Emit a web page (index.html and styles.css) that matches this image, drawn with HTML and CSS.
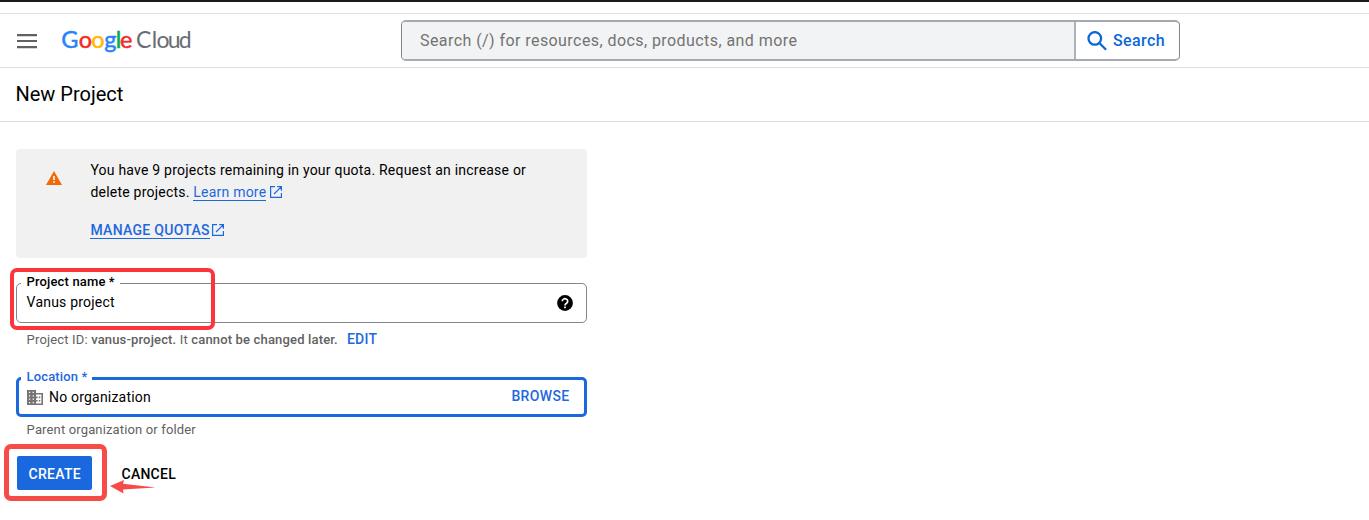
FILE: index.html
```
<!DOCTYPE html>
<html lang="en">
<head>
<meta charset="utf-8">
<title>New Project</title>
<link rel="stylesheet" href="styles.css">
</head>
<body>
<div class="window-edge"></div>
<header class="topbar">
  <svg class="menu-icon" width="20" height="15" viewBox="0 0 20 15"><path d="M0 0h20v2.2H0zM0 6.1h20v2H0zM0 12h20v2.2H0z" fill="#616161"/></svg>
  <svg class="logo" width="134" height="32" viewBox="0 0 134 32">
    <text y="20.4" class="logo-google"><tspan x="0.2" class="blue">G</tspan><tspan x="17.8" class="red">o</tspan><tspan x="30.3" class="yellow">o</tspan><tspan x="43.3" class="blue">g</tspan><tspan x="54.8" class="green">l</tspan><tspan x="58.9" class="red">e</tspan></text>
    <text y="20.4" class="logo-cloud" x="75 90.7 95.5 106.8 117.7">Cloud</text>
  </svg>
  <div class="search">
    <div class="search-input">Search (/) for resources, docs, products, and more</div>
    <div class="search-button">
      <svg width="20" height="20" viewBox="0 0 20 20" fill="none" stroke="#0b67dc" stroke-width="2.3"><circle cx="7.8" cy="7.4" r="6.3"/><path d="M12.1 11.7l7 7"/></svg>
      <span>Search</span>
    </div>
  </div>
</header>
<h1 class="page-title">New Project</h1>
<main class="content">
  <section class="notice">
    <svg class="warning" width="16" height="14" viewBox="0 0 16 14"><path d="M8 0l8 14H0z" fill="#f06a0a"/><path d="M7.2 5h1.6v4H7.2zM7.2 10.2h1.6v1.6H7.2z" fill="#fff"/></svg>
    <div class="notice-body">
      <p class="notice-text">You have 9 projects remaining in your quota. Request an increase or<br>delete projects. <a class="link">Learn more</a><svg class="external" width="12" height="12" viewBox="0 0 12 12"><path d="M5 .6H.6v10.8h10.8V7M7.2.6h4.2v4.2M11.2.8L4 8" /></svg></p>
      <p class="quotas"><a class="link">MANAGE QUOTAS</a><svg class="external" width="12" height="12" viewBox="0 0 12 12"><path d="M5 .6H.6v10.8h10.8V7M7.2.6h4.2v4.2M11.2.8L4 8" /></svg></p>
    </div>
  </section>
  <div class="field name-field">
    <label class="label">Project name *</label>
    <span class="value">Vanus project</span>
    <svg width="16" height="16" viewBox="0 0 16 16"><circle cx="8" cy="8" r="7.9"/><path d="M5.3 6.3a2.7 2.5 0 1 1 4.3 1.9C8.6 8.9 8 9.1 8 10.4M8 11.5v1.7" fill="none" stroke="#fff" stroke-width="1.7"/></svg>
    <div class="name-highlight"></div>
  </div>
  <p class="hint id-hint">Project ID: <b>vanus-project.</b> It <b>cannot be changed later.</b><a class="edit">EDIT</a></p>
  <div class="field location-field">
    <label class="label">Location *</label>
    <svg width="16" height="15" viewBox="0 0 16 15"><path fill="#757575" fill-rule="evenodd" d="M0 0h9v3h7v12H0zM1.9 1.8v1.2h1.3V1.8zM5.6 1.8v1.2h1.3V1.8zM1.9 5.2v1.2h1.3V5.2zM5.6 5.2v1.2h1.3V5.2zM1.9 8.6v1.2h1.3V8.6zM5.6 8.6v1.2h1.3V8.6zM1.9 12v1.2h1.3V12zM5.6 12v1.2h1.3V12zM9 4.6v2h1.6v1.6H9V10h1.6v1.6H9v1.8h5.4V4.6zM11.8 6.6h1.5v1.6h-1.5zM11.8 10h1.5v1.6h-1.5z"/></svg>
    <span class="value">No organization</span>
    <span class="browse">BROWSE</span>
  </div>
  <p class="hint">Parent organization or folder</p>
  <div class="actions">
    <div class="create">CREATE<div class="create-highlight"></div></div>
    <div class="cancel">CANCEL<svg class="arrow" width="46" height="14" viewBox="0 0 46 14"><path d="M0 6L14 0L13 3.8L45.5 7.5L13 9.4L13.5 13.6Z" fill="#f74b48"/></svg></div>
  </div>
</main>
</body>
</html>
```

FILE: styles.css
```
* { box-sizing: border-box; }
body { margin: 0; background: #fff; color: #000; font: 14px/22px Roboto, sans-serif; height: 520px; overflow: hidden; }
p, h1 { margin: 0; }
svg { display: block; flex: none; }
.window-edge { height: 14px; border-top: 2px solid #1b191a; border-bottom: 1px solid #e0e0e0; }
.topbar { height: 54px; display: flex; align-items: flex-start; padding: 6px 0 0 17px; border-bottom: 1px solid #dedede; }
.menu-icon { margin-top: 14px; }
.logo { margin: 8px 0 0 24px; overflow: visible; }
.logo-google { font: 400 23.5px Lato, sans-serif; stroke-width: .5px; }
.blue { fill: #2684fc; stroke: #2684fc; }
.red { fill: #f72a25; stroke: #f72a25; }
.yellow { fill: #ffba00; stroke: #ffba00; }
.green { fill: #00ac47; stroke: #00ac47; }
.logo-cloud { font: 400 23px Lato, sans-serif; fill: #686d72; }
.search { margin-left: 206px; width: 779px; height: 41px; display: flex; border: 1px solid #80878b; border-top: 2px solid #a4a9ad; border-bottom: 2px solid #a6abaf; border-radius: 5px; overflow: hidden; }
.search-input { width: 674px; padding: 0 18px; background: #f1f3f4; border-right: 2px solid #aeb3b6; color: #737373; font-size: 16px; line-height: 37px; letter-spacing: .43px; white-space: nowrap; }
.search-button { display: flex; align-items: center; gap: 6px; padding-left: 11px; color: #0b67dc; font-size: 16px; font-weight: 500; letter-spacing: .4px; }
.page-title { height: 54px; padding-left: 15.5px; border-bottom: 1px solid #dedede; font-size: 20px; line-height: 53px; font-weight: 400; letter-spacing: 0; }
.content { padding: 27px 0 0 16px; width: 587px; }
.notice { display: flex; height: 109px; padding: 10px 0 0 30px; background: #f1f1f1; border-radius: 4px; }
.warning { margin-top: 12px; }
.notice-body { margin-left: 28.4px; white-space: nowrap; letter-spacing: .22px; }
.link { color: #1e68de; border-bottom: 1px solid #1e68de; }
.external { display: inline-block; margin-left: 3.5px; vertical-align: -1px; fill: none; stroke: #1e68de; stroke-width: 1.2; }
.quotas { margin-top: 16px; font-weight: 500; letter-spacing: .3px; }
.quotas .external { margin-left: 2.5px; }
.field { position: relative; display: flex; align-items: center; width: 571px; height: 40px; border: 1px solid #80868b; border-radius: 5px; padding-left: 9.6px; }
.value { letter-spacing: .2px; }
.label { position: absolute; left: 4px; padding: 0 5px 0 5.6px; background: #fff; font-size: 13px; font-weight: 500; line-height: 16px; letter-spacing: .14px; white-space: nowrap; }
.name-field { margin-top: 25px; padding-right: 13.5px; justify-content: space-between; }
.name-field .value { padding-bottom: 2px; }
.name-field .label { top: -10px; }
.name-highlight { position: absolute; left: -7px; top: -16px; width: 205px; height: 62px; border: 4.5px solid #fe343c; border-radius: 7px; }
.hint { padding-left: 10.6px; color: #616161; font-size: 13px; line-height: 20px; letter-spacing: .15px; white-space: nowrap; }
.hint b { font-weight: 500; }
.id-hint { margin-top: 6px; letter-spacing: .16px; }
.edit { margin-left: 9px; color: #1e68de; font-size: 14px; font-weight: 500; letter-spacing: .3px; }
.location-field { margin-top: 27px; border: 3px solid #1a68de; padding: 0 14.5px 0 8px; }
.location-field .label { left: 2px; top: -11px; color: #1e68de; }
.location-field .value { margin-left: 6px; }
.browse { margin-left: auto; padding-bottom: 2px; color: #1e68de; font-weight: 500; letter-spacing: .35px; }
.location-field + .hint { margin-top: 3px; }
.actions { display: flex; margin: 16px 0 0 1px; font-weight: 500; line-height: 36px; letter-spacing: .25px; }
.create { position: relative; width: 74.5px; height: 34px; padding-left: 1px; background: #1a68de; border-radius: 2px; color: #fff; text-align: center; letter-spacing: .3px; }
.create-highlight { position: absolute; left: -13px; top: -12px; width: 103px; height: 57px; border: 5px solid #f74b48; border-radius: 7px; }
.cancel { position: relative; margin-left: 30px; }
.arrow { position: absolute; left: -12px; top: 24px; }
```
